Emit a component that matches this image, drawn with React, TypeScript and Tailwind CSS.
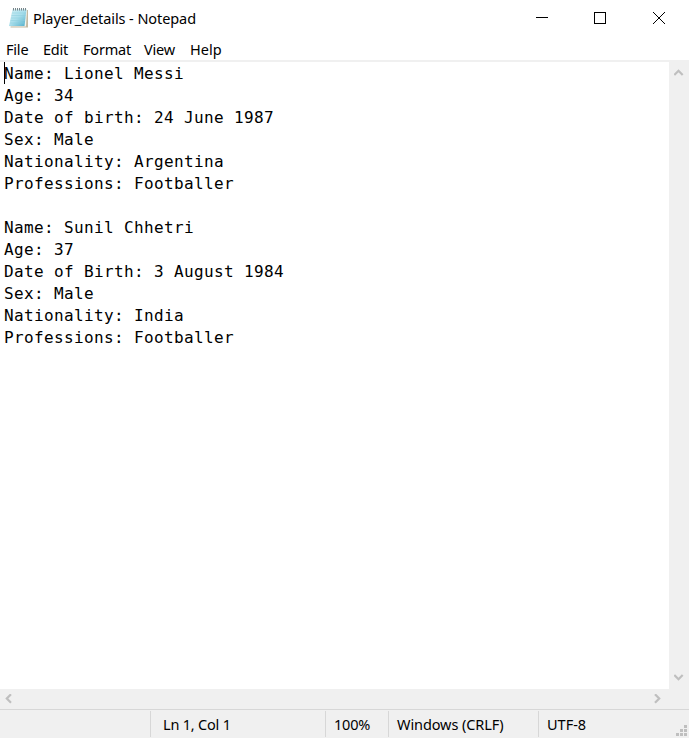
import React from "react";

const lines: string[] = [
  "Name: Lionel Messi",
  "Age: 34",
  "Date of birth: 24 June 1987",
  "Sex: Male",
  "Nationality: Argentina",
  "Professions: Footballer",
  "",
  "Name: Sunil Chhetri",
  "Age: 37",
  "Date of Birth: 3 August 1984",
  "Sex: Male",
  "Nationality: India",
  "Professions: Footballer",
];

function NotepadIcon() {
  return (
    <svg width="22" height="22" viewBox="0 0 22 22" className="shrink-0">
      <defs>
        <linearGradient id="page" x1="0" y1="0" x2="1" y2="1">
          <stop offset="0" stopColor="#d3f0f6" />
          <stop offset="0.5" stopColor="#a9deeb" />
          <stop offset="1" stopColor="#4fadc9" />
        </linearGradient>
      </defs>
      <path d="M5 3H20V20.5H2.5Z" fill="#c4b9a2" />
      <path d="M4.5 2.5H19L18 19.5H1.5Z" fill="#f1f4ee" />
      <path d="M4.5 2.5H18.5L16.5 19H1Z" fill="url(#page)" />
      <path d="M4 6H18M3.5 8.5H17.5M3 11H17.3M2.6 13.5H17M2.2 16H16.7" stroke="#8accdc" strokeWidth="0.5" />
      <path d="M5.5 1V3.5M7.5 1V3.5M9.5 1V3.5M11.5 1V3.5M13.5 1V3.5M15.5 1V3.5M17.5 1V3.5" stroke="#77858a" strokeWidth="1" />
    </svg>
  );
}

function Chevron({ d, w, h }: { d: string; w: number; h: number }) {
  return (
    <svg width={w} height={h} viewBox={`0 0 ${w} ${h}`} fill="none" stroke="#bfbfbf" strokeWidth="2.2">
      <path d={d} />
    </svg>
  );
}

function TitleBar() {
  return (
    <header className="flex h-[37px] shrink-0 items-start">
      <div className="pl-2 pt-[7px]"><NotepadIcon /></div>
      <h1 className="ml-[3px] mt-[8px] text-[14.5px] leading-5 tracking-[-0.08px]">Player_details - Notepad</h1>
      <div className="ml-auto flex pr-6 pt-3">
        <svg width="129" height="13" viewBox="0 0 129 13" fill="none" stroke="#000" shapeRendering="crispEdges">
          <path d="M0 5.5H12" />
          <rect x="58.5" y="0.5" width="11" height="11" />
          <path d="M117 0L129 12M129 0L117 12" shapeRendering="auto" />
        </svg>
      </div>
    </header>
  );
}

function MenuBar() {
  return (
    <nav className="flex h-[23px] shrink-0 pl-1.5 pt-0.5 text-[14.5px] leading-5 tracking-[-0.2px]">
      <span className="w-[37px]">File</span>
      <span className="w-10">Edit</span>
      <span className="w-[61px]">Format</span>
      <span className="w-[46px]">View</span>
      <span className="tracking-normal">Help</span>
    </nav>
  );
}

function StatusBar() {
  return (
    <footer className="flex h-[29px] shrink-0 border-t border-[#d7d7d7] bg-[#f0f0f0] pt-px text-[14.5px] leading-[27px] tracking-[-0.2px]">
      <div className="h-[26px] w-[151px] border-r border-[#d7d7d7]" />
      <div className="h-[26px] w-[175px] border-r border-[#d7d7d7] pl-3">Ln 1, Col 1</div>
      <div className="h-[26px] w-[63px] border-r border-[#d7d7d7] pl-2">100%</div>
      <div className="h-[26px] w-[150px] whitespace-nowrap border-r border-[#d7d7d7] pl-2 tracking-[-0.1px]">Windows (CRLF)</div>
      <div className="pl-2 tracking-normal">UTF-8</div>
      <svg width="11" height="11" viewBox="0 0 11 11" fill="#bfbfbf" className="mb-0.5 ml-auto mr-0.5 self-end">
        <path d="M8 0h3v3h-3zM4 4h3v3h-3zM8 4h3v3h-3zM0 8h3v3h-3zM4 8h3v3h-3zM8 8h3v3h-3z" />
      </svg>
    </footer>
  );
}

export default function App() {
  return (
    <div className="flex h-[738px] w-[689px] flex-col overflow-hidden bg-white font-['Noto_Sans',sans-serif] text-black">
      <TitleBar />
      <MenuBar />
      <main className="flex h-[629px] shrink-0">
        <div className="relative flex-1 border-t-2 border-[#f0f0f0] pl-1 pt-px">
          <pre className="font-['DejaVu_Sans_Mono',monospace] text-[16px] leading-[22px] tracking-[0.368px]">
            {lines.map((line, i) => (
              <div key={i} className="h-[22px]">{line}</div>
            ))}
          </pre>
          <div className="absolute left-1 top-0 h-[22px] w-px bg-black" />
        </div>
        <div className="flex w-5 flex-col items-center justify-between bg-[#f0f0f0] pb-2 pt-[9px]">
          <Chevron w={10} h={7} d="M0.3 6L4.5 1.8L8.7 6" />
          <Chevron w={10} h={7} d="M0.3 1L4.5 5.2L8.7 1" />
        </div>
      </main>
      <div className="flex h-5 shrink-0 items-center justify-between bg-[#f0f0f0] pl-[5px] pr-7">
        <Chevron w={7} h={10} d="M6 0.3L1.8 4.5L6 8.7" />
        <Chevron w={7} h={10} d="M1 0.3L5.2 4.5L1 8.7" />
      </div>
      <StatusBar />
    </div>
  );
}
